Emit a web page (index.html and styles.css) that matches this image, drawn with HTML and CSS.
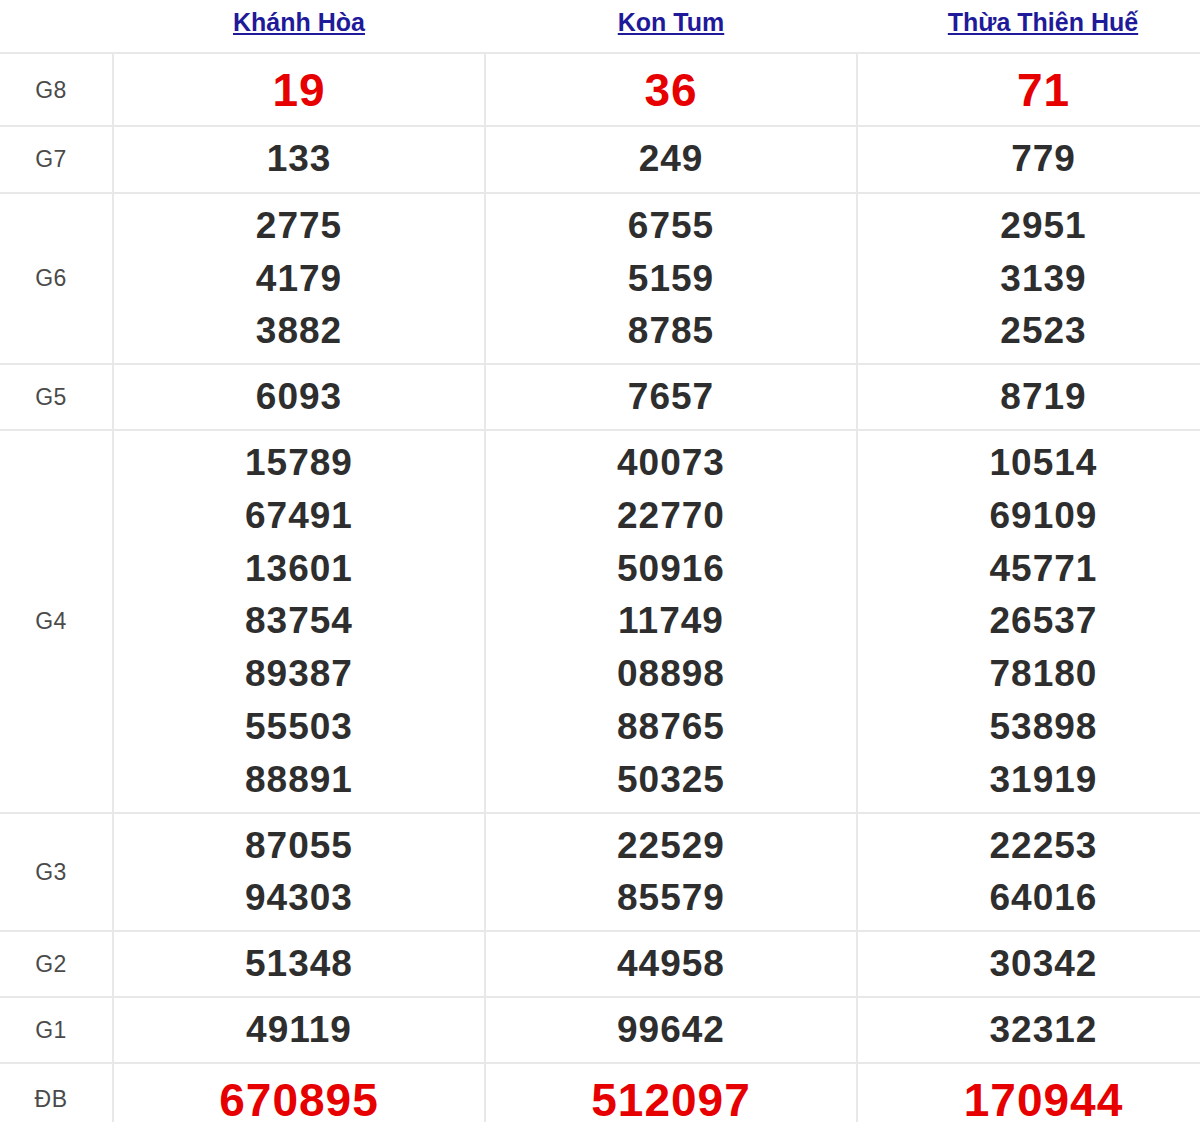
FILE: index.html
```html
<!DOCTYPE html>
<html lang="vi">
<head>
<meta charset="utf-8">
<title>Kết quả xổ số</title>
<link rel="stylesheet" href="styles.css">
</head>
<body>
<table class="kqxs">
  <colgroup>
    <col class="c-lbl">
    <col class="c-prov">
    <col class="c-prov">
    <col class="c-prov">
  </colgroup>
  <thead>
    <tr>
      <th class="lbl"></th>
      <th><a href="#">Khánh Hòa</a></th>
      <th><a href="#">Kon Tum</a></th>
      <th><a href="#">Thừa Thiên Huế</a></th>
    </tr>
  </thead>
  <tbody>
    <tr class="big">
      <td class="lbl">G8</td>
      <td><div class="n red">19</div></td>
      <td><div class="n red">36</div></td>
      <td><div class="n red">71</div></td>
    </tr>
    <tr class="g7">
      <td class="lbl">G7</td>
      <td><div class="n">133</div></td>
      <td><div class="n">249</div></td>
      <td><div class="n">779</div></td>
    </tr>
    <tr>
      <td class="lbl">G6</td>
      <td><div class="n">2775</div><div class="n">4179</div><div class="n">3882</div></td>
      <td><div class="n">6755</div><div class="n">5159</div><div class="n">8785</div></td>
      <td><div class="n">2951</div><div class="n">3139</div><div class="n">2523</div></td>
    </tr>
    <tr>
      <td class="lbl">G5</td>
      <td><div class="n">6093</div></td>
      <td><div class="n">7657</div></td>
      <td><div class="n">8719</div></td>
    </tr>
    <tr>
      <td class="lbl">G4</td>
      <td><div class="n">15789</div><div class="n">67491</div><div class="n">13601</div><div class="n">83754</div><div class="n">89387</div><div class="n">55503</div><div class="n">88891</div></td>
      <td><div class="n">40073</div><div class="n">22770</div><div class="n">50916</div><div class="n">11749</div><div class="n">08898</div><div class="n">88765</div><div class="n">50325</div></td>
      <td><div class="n">10514</div><div class="n">69109</div><div class="n">45771</div><div class="n">26537</div><div class="n">78180</div><div class="n">53898</div><div class="n">31919</div></td>
    </tr>
    <tr>
      <td class="lbl">G3</td>
      <td><div class="n">87055</div><div class="n">94303</div></td>
      <td><div class="n">22529</div><div class="n">85579</div></td>
      <td><div class="n">22253</div><div class="n">64016</div></td>
    </tr>
    <tr>
      <td class="lbl">G2</td>
      <td><div class="n">51348</div></td>
      <td><div class="n">44958</div></td>
      <td><div class="n">30342</div></td>
    </tr>
    <tr>
      <td class="lbl">G1</td>
      <td><div class="n">49119</div></td>
      <td><div class="n">99642</div></td>
      <td><div class="n">32312</div></td>
    </tr>
    <tr class="big">
      <td class="lbl">ĐB</td>
      <td><div class="n red">670895</div></td>
      <td><div class="n red">512097</div></td>
      <td><div class="n red">170944</div></td>
    </tr>
  </tbody>
</table>
</body>
</html>
```

FILE: styles.css
```css
html, body {
  margin: 0;
  padding: 0;
  background: #ffffff;
  overflow: hidden;
}

body {
  font-family: "Liberation Sans", Arial, sans-serif;
  color: #333333;
}

.kqxs {
  border-collapse: collapse;
  table-layout: fixed;
  width: 1229px;
}

.c-lbl { width: 113px; }
.c-prov { width: 372px; }

.kqxs th {
  height: 52px;
  padding: 0 0 8px 0;
  line-height: 44px;
  font-size: 25px;
  font-weight: bold;
  text-align: center;
  vertical-align: middle;
  box-sizing: border-box;
}

.kqxs th a {
  color: #1f1a9a;
  text-decoration: underline;
  text-underline-offset: 2px;
}

.kqxs td {
  border-top: 2px solid #e8e8e8;
  border-left: 2px solid #e8e8e8;
  padding: 6px 0 5px 0;
  text-align: center;
  vertical-align: middle;
}

.kqxs .g7 td {
  padding-bottom: 6px;
}

.kqxs td.lbl {
  border-left: none;
  padding-right: 10px;
  font-size: 23px;
  letter-spacing: 0.5px;
  color: #4a4a4a;
}

.n {
  font-size: 37px;
  line-height: 52.8px;
  font-weight: bold;
  letter-spacing: 1px;
  color: #2e2e2e;
}

.big .n {
  font-size: 46px;
  line-height: 60px;
  letter-spacing: 1px;
}

.n.red {
  color: #e60000;
}
```
